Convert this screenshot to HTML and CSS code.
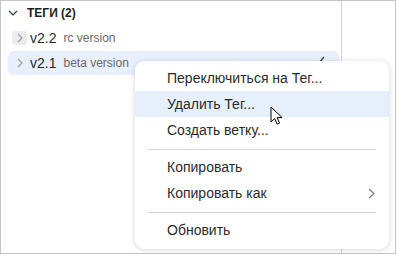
FILE: index.html
```html
<!DOCTYPE html>
<html lang="en">
<head>
  <meta charset="UTF-8">
  <title>Теги</title>
  <link rel="stylesheet" href="styles.css">
</head>
<body>
  <div class="frame">
    <div class="tree">
      <div class="section-header">
        <svg class="caret-down" width="10" height="6" viewBox="0 0 10 6"><path d="M1 1l4 4 4-4" fill="none" stroke="#2b3a55" stroke-width="1.2"/></svg>
        <span class="section-title">ТЕГИ (2)</span>
      </div>
      <div class="tag-row">
        <span class="expander"><svg width="6" height="10" viewBox="0 0 6 10"><path d="M1 1l4 4-4 4" fill="none" stroke="#9a9a9a" stroke-width="1.1"/></svg></span>
        <span class="tag-name">v2.2</span>
        <span class="tag-desc">rc version</span>
      </div>
      <div class="tag-row selected">
        <span class="expander plain"><svg width="6" height="10" viewBox="0 0 6 10"><path d="M1 1l4 4-4 4" fill="none" stroke="#9a9a9a" stroke-width="1.1"/></svg></span>
        <span class="tag-name">v2.1</span>
        <span class="tag-desc">beta version</span>
        <svg class="check" width="12" height="10" viewBox="0 0 12 10"><path d="M1 6l3 3 7-8" fill="none" stroke="#444" stroke-width="1.3"/></svg>
      </div>
    </div>
    <div class="side"></div>

    <div class="menu">
      <div class="menu-item">Переключиться на Тег...</div>
      <div class="menu-item active">Удалить Тег...</div>
      <div class="menu-item">Создать ветку...</div>
      <div class="menu-sep"></div>
      <div class="menu-item">Копировать</div>
      <div class="menu-item">Копировать как
        <svg class="submenu" width="7" height="11" viewBox="0 0 7 11"><path d="M1 1l5 4.5-5 4.5" fill="none" stroke="#777" stroke-width="1.1"/></svg>
      </div>
      <div class="menu-sep"></div>
      <div class="menu-item">Обновить</div>
    </div>

    <svg class="cursor" width="14" height="19" viewBox="0 0 14 19">
      <path d="M1 1v15l3.6-3.4 2.6 5.6 2.4-1.1-2.5-5.5h5z" fill="#fff" stroke="#000" stroke-width="1" stroke-linejoin="round"/>
    </svg>
  </div>
</body>
</html>
```

FILE: styles.css
```css
body {
  margin: 0;
  font-family: 'Liberation Sans', Arial, sans-serif;
  background: #fff;
}

.frame {
  position: relative;
  width: 396px;
  height: 254px;
  box-sizing: border-box;
  border: 1px solid #c6c6c6;
  display: flex;
}

.tree {
  width: 340px;
  border-right: 1px solid #d4d4d4;
  display: flex;
  flex-direction: column;
  gap: 1px;
}

.section-header {
  height: 24px;
  display: flex;
  align-items: center;
  padding-left: 7px;
}

.caret-down {
  margin-right: 9px;
}

.section-title {
  font-size: 12px;
  font-weight: bold;
  color: #1f1f1f;
}

.tag-row {
  height: 24px;
  margin: 0 2px 0 7px;
  padding-left: 4px;
  display: flex;
  align-items: center;
  border-radius: 6px;
}

.tag-row.selected {
  background: #e7f0fc;
}

.expander {
  width: 15px;
  height: 14px;
  border-radius: 3px;
  background: #ececec;
  display: flex;
  align-items: center;
  justify-content: center;
  margin-right: 3px;
}

.expander.plain {
  background: transparent;
}

.tag-name {
  font-size: 14px;
  color: #2a2a2a;
  margin-right: 7px;
}

.tag-desc {
  font-size: 12px;
  color: #6b6b6b;
}

.check {
  margin-left: auto;
  margin-right: 14px;
  margin-top: -4px;
}

.side {
  flex: 1;
}

.menu {
  position: absolute;
  left: 134px;
  top: 60px;
  width: 254px;
  padding: 4px 0 6px;
  background: #fff;
  border-radius: 9px;
  box-shadow: 0 1px 6px rgba(0, 0, 0, 0.16);
}

.menu-item {
  height: 26px;
  padding-left: 32px;
  padding-right: 14px;
  display: flex;
  align-items: center;
  font-size: 14px;
  color: #2b2b2b;
}

.menu-item.active {
  background: #e6effc;
}

.submenu {
  margin-left: auto;
}

.menu-sep {
  height: 1px;
  margin: 6px 13px 4px;
  background: #d6d6d6;
}

.cursor {
  position: absolute;
  left: 269px;
  top: 105px;
}
```
